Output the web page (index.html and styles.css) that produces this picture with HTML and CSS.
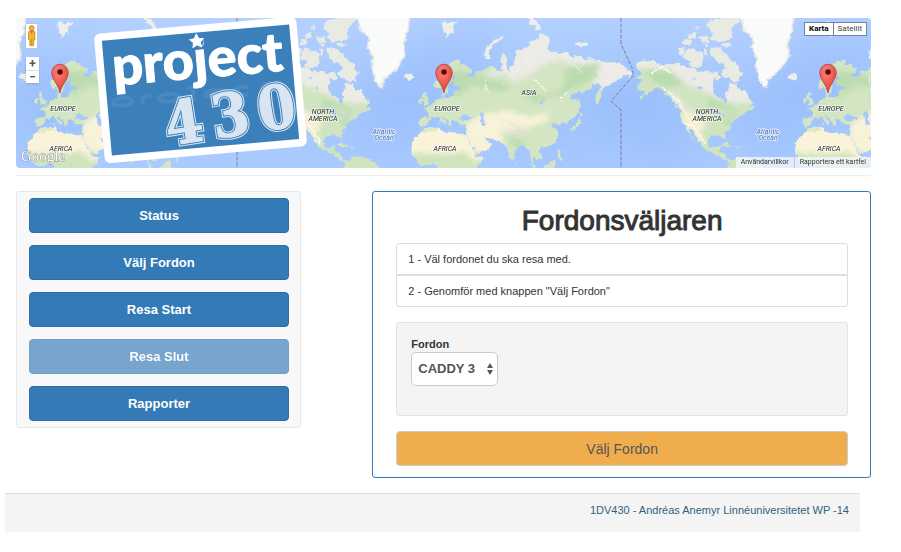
FILE: index.html
```html
<!DOCTYPE html>
<html lang="sv">
<head>
<meta charset="utf-8">
<title>Fordonsväljaren</title>
<link rel="stylesheet" href="styles.css">
</head>
<body>
<div class="page">
<header class="map">
  <svg class="map-canvas" viewBox="16 18 855 150" preserveAspectRatio="xMidYMid slice" aria-hidden="true">
    <defs>
      <linearGradient id="sea" x1="0" y1="0" x2="0" y2="1">
        <stop offset="0" stop-color="#b3d0ff"/><stop offset=".55" stop-color="#a5c7fd"/><stop offset="1" stop-color="#aacbff"/>
      </linearGradient>
      <radialGradient id="pinFill" cx=".4" cy=".25" r=".7"><stop offset="0" stop-color="#ff8076"/><stop offset="1" stop-color="#e2453c"/></radialGradient>
      <filter id="coast" x="-5%" y="-5%" width="110%" height="110%">
        <feTurbulence type="fractalNoise" baseFrequency=".22" numOctaves="2" seed="4" result="n"/>
        <feDisplacementMap in="SourceGraphic" in2="n" scale="5" xChannelSelector="R" yChannelSelector="G"/>
      </filter>
      <filter id="soft"><feGaussianBlur stdDeviation="8"/></filter>
      <filter id="deep"><feGaussianBlur stdDeviation="22"/></filter>
      <path id="eurasia" d="M403 232L405 215 418 208 428 190 445 165 458 155 468 150 482 153 484 162 500 165 515 178 516 188 500 192 506 200 520 202 530 190 528 182 545 184 560 174 572 168 590 176 604 187 608 160 602 135 612 128 620 150 618 175 628 187 634 165 642 160 648 125 665 120 685 110 690 95 715 85 722 70 740 78 752 95 740 108 745 125 770 122 775 132 800 125 815 140 840 138 855 150 875 148 900 152 920 155 955 158 980 175 998 190 990 200 970 194 965 205 945 212 930 225 910 232 908 245 895 280 887 283 886 262 892 245 906 225 890 222 870 235 850 245 825 248 808 260 818 272 835 268 840 288 835 310 820 325 800 340 790 335 775 348 768 345 765 335 750 345 760 352 772 362 775 375 765 395 745 410 735 412 722 415 715 420 725 435 722 450 710 450 702 440 698 452 708 480 700 480 692 445 688 420 680 418 670 405 655 410 645 420 640 450 632 448 620 415 610 400 595 392 570 388 560 385 550 378 560 392 577 400 568 415 540 430 527 435 515 410 500 385 498 370 500 352 498 346 480 346 475 338 465 328 455 330 457 345 450 348 440 330 424 317 430 328 438 336 433 345 424 333 413 318 400 325 393 322 385 335 375 348 360 350 357 335 360 323 385 322 388 305 372 295 385 290 400 278 415 268 425 262 424 248 430 246 433 262 455 262 462 255 465 240 485 235 480 228 462 228 458 215 468 200 460 195 455 210 445 225 440 250 432 255 425 235 415 235Z"/>
      <path id="africa" d="M375 355L395 351 418 350 424 365 440 370 455 367 480 372 497 375 505 395 515 415 527 440 550 440 545 455 530 470 530 490 420 490 413 468 398 463 375 468 360 465 345 445 334 430 336 398 347 383 360 370Z"/>
      <path id="namerica" d="M138 160L165 150 195 155 215 165 250 162 265 158 290 172 310 176 335 190 350 180 360 190 385 185 370 210 368 235 375 255 395 262 405 285 412 270 408 250 415 235 420 218 440 225 450 240 465 240 475 262 492 280 478 290 495 300 480 303 465 308 450 322 425 340 420 352 405 372 410 392 400 382 385 375 365 378 352 390 355 410 375 412 390 405 388 425 400 430 410 448 430 455 418 460 395 445 375 430 345 418 330 400 310 368 296 352 302 375 314 392 304 382 288 350 275 335 270 300 262 285 240 265 215 240 195 235 175 250 150 262 165 245 145 240 140 225 155 212 135 205 158 190 140 175Z"/>
      <clipPath id="eurasiaClip"><use href="#eurasia"/></clipPath>
      <clipPath id="africaClip"><use href="#africa"/></clipPath>
      <clipPath id="namericaClip"><use href="#namerica"/></clipPath>
      <g id="world">
        <g clip-path="url(#eurasiaClip)">
          <path fill="#d3e5c3" d="M340 60H1010V490H340z"/>
          <g filter="url(#soft)">
            <path fill="#ecebe6" d="M560 205L600 150 650 60H1010V235L900 240 850 180 780 150 730 165 690 195 640 215 610 190Z"/>
            <path fill="#bcdcb0" d="M440 180L520 190 640 230 600 245 520 225 470 260 440 220zM800 170L900 160 890 200 820 240 700 280 660 230 740 260 790 230zM620 380L680 390 650 420z"/>
            <path fill="#f8f2d8" d="M495 345L550 310 620 300 690 320 750 305 740 335 690 350 670 365 600 365 615 400 570 440 500 410z"/>
            <path fill="#e6e2d4" d="M605 325L640 345 690 355 680 368 640 365z"/>
          </g>
          <path fill="#a8c9fc" d="M476 322L492 311 505 318 518 322 515 330 490 331zM538 310L552 306 550 318 556 330 555 348 545 348 543 330zM716 280L735 264 738 268 720 283z"/>
          <path fill="none" stroke="#f8f6ef" stroke-width="3" d="M445 165L428 193 410 215M605 325L625 348 648 358M700 205L740 245M780 270L820 230M555 205L560 250M675 165L700 130M825 165L850 195"/>
        </g>
        <g clip-path="url(#africaClip)">
          <path fill="#f9f3da" d="M320 340H570V490H320z"/><path fill="#cfe4bd" filter="url(#soft)" d="M325 428L440 432 500 425 525 455 570 440V500H325z"/>
          <path fill="#e0e8c4" d="M370 353L418 350 405 362 365 370z"/>
        </g>
        <path fill="#d3e5c3" d="M370 245L380 248 379 260 388 272 390 283 368 289 376 276 369 265zM357 268L368 264 367 279 358 281zM838 307L852 313 842 320zM838 322L842 336 834 352 812 361 804 356 826 348zM774 418L782 420 780 434 788 444 784 455 774 440zM768 378L773 382 770 390zM643 450L649 458 644 462zM728 473L760 450 768 460 760 480H735zM415 338L420 337 420 343 415 345z"/>
        <path fill="#eeeeea" d="M310 203L316 191 338 192 342 200 327 211zM424 36L438 33 440 44 450 36 472 35 464 48 456 50 462 73 450 68 440 82 430 64zM684 22L704 24 720 45 722 58 706 62 708 47 690 40zM826 96L838 93 842 103 856 96 866 106 840 110 828 106zM862 139L872 142 866 148zM555 146L553 130 560 112 574 98 590 86 605 79 606 87 590 96 574 110 566 128 571 148z"/>
        <g transform="translate(870 0)">
          <g clip-path="url(#namericaClip)">
            <path fill="#d0e4c0" d="M120 140H510V470H120z"/>
            <g filter="url(#soft)">
              <path fill="#ecebe5" d="M120 140L260 145 350 170 480 180 500 275 420 280 350 245 300 230 270 200 200 180 130 175zM230 230L285 280 300 330 278 300 255 280z"/>
              <path fill="#badbaf" d="M165 175L240 180 270 220 240 235 190 215zM350 265L430 290 430 300 350 290zM400 340L440 290 420 350z"/>
              <path fill="#f7efd6" d="M270 320L300 300 350 340 330 370 350 400 330 400z"/>
            </g>
            <path fill="none" stroke="#fbfaf4" stroke-width="4" d="M218 232L262 268 292 318M180 190L220 170 240 190M280 340L312 348 345 400"/>
            <path fill="#a8c9fc" d="M304 205L316 202 318 209zM324 233L338 229 332 240zM365 305L382 298 392 304 380 308zM384 310L390 307 389 325 384 326zM397 309L407 316 400 322z"/>
          </g>
          <path fill="#e9ebe2" d="M294 115L318 121 337 125 341 143 334 170 320 174 298 170 302 153 280 145zM266 115L281 111 288 126 275 142 267 136zM343 115L352 118 350 138 340 130zM276 96L290 88 306 90 304 104 284 104zM296 78L318 66 318 81 300 88zM326 78L352 80 360 95 336 96zM360 115L384 110 406 128 428 154 443 160 446 180 460 190 448 198 447 213 432 218 418 202 404 205 395 188 410 172 398 158 380 156 366 136zM370 198L388 190 396 204 380 212zM352 40L372 26 412 24H456L440 40 425 58 427 84 408 94 372 94 360 84 372 70 355 58zM342 97L356 104 350 112zM312 51L328 48 326 60zM390 102L420 101 424 107 400 110z"/>
          <path fill="#d0e4c0" d="M413 470L422 455 440 442 460 440 480 445 512 460 522 490H410zM387 404L408 400 424 408 420 411zM427 410L448 411 444 417zM478 289L494 290 490 301zM249 280L266 292 262 298zM151 258L160 255 153 272zM90 145L99 147 94 151z"/>
          <path fill="#f9fafa" stroke="#e5e8e6" stroke-width="5" d="M445 10L458 36 462 62 490 84 484 112 502 142 498 172 505 200 515 225 527 234 535 207 560 188 584 160 597 133 592 100 606 64 612 10z"/>
        </g>
      </g>
      <g id="labels" font-family="Roboto, sans-serif" font-size="7" font-style="italic" fill="#222" stroke="#fff" stroke-opacity=".65" stroke-width="1.4" paint-order="stroke" text-anchor="middle">
        <text x="447" y="111">EUROPE</text><text x="445" y="151">AFRICA</text><text x="529" y="95">ASIA</text>
        <text x="707" y="114">NORTH</text><text x="707" y="121">AMERICA</text>
        <g fill="#4e73aa"><text x="768" y="134">Atlantic</text><text x="768" y="140">Ocean</text></g>
      </g>
      <g id="pin">
        <path fill="url(#pinFill)" stroke="#a52b25" stroke-width=".6" d="M0 0C-1-8-8.300-13-8.300-20.500A8.300 8.300 0 0 1 8.300-20.500C8.300-13 1-8 0 0Z"/>
        <circle cy="-21" r="2.800" fill="#51100c"/>
      </g>
    </defs>
    <path fill="url(#sea)" d="M16 18H871V168H16z"/>
    <g fill="#8db6fb" opacity=".4" filter="url(#deep)">
      <path d="M390 60L500 20 480 90 430 110 400 160 350 130zM600 70L660 60 700 140 670 170 580 130zM774 60L871 20V100L815 110 784 160 734 130zM500 140L600 125 560 170zM16 70L70 50 90 110 30 160z"/>
    </g>
    <g filter="url(#coast)">
      <g transform="translate(300 10) scale(.33333)">
        <use href="#world" x="-2304"/><use href="#world" x="-1152"/><use href="#world"/><use href="#world" x="1152"/>
      </g>
    </g>
    <g fill="none" stroke="#765f88" stroke-width="1" stroke-dasharray="4 1.500" opacity=".75">
      <path id="dateline" d="M621 18V44L633 70V76L611 101 621 110V168"/><use href="#dateline" x="-384"/>
    </g>
    <use href="#labels" x="-384"/><use href="#labels"/><use href="#labels" x="384"/>
    <use href="#pin" x="60" y="93"/><use href="#pin" x="444" y="93"/><use href="#pin" x="828" y="93"/>
    <text x="21" y="161" font-family="Liberation Serif, serif" font-size="15" fill="#fff" stroke="#888" stroke-width=".8" paint-order="stroke">Google</text>
    <g>
      <rect x="25.500" y="23.500" width="12" height="25" rx="1" fill="#fff" stroke="#aab" stroke-width=".6"/>
      <path fill="#f5b32b" stroke="#b87818" stroke-width=".6" d="M28.500 32L30 30.500H33.500L35 32V40H33.700V45.500H29.800V40H28.500z"/><circle cx="31.700" cy="28" r="2.500" fill="#f5b32b" stroke="#b87818" stroke-width=".6"/>
      <path d="M30 31H33.500L31.700 34z" fill="#e5673d"/><path d="M31.700 39V45" stroke="#b87818" stroke-width=".6"/>
    </g>
    <g transform="rotate(-5 200 90)">
      <rect x="99" y="25" width="203" height="130" rx="6" fill="#fff"/>
      <rect x="106.500" y="32.500" width="188" height="115" fill="#3b80ba"/>
      <g fill="none" stroke="#6fa2cd" stroke-width="4" opacity=".28">
        <path d="M113 99V91M113 95a9 4 0 1 0 9-4a9 4 0 0 0-9 4M142 99V95q0-4 9-4M158 95a10 4 0 1 0 20 0a10 4 0 1 0-20 0M193 100V91q0-4-6-4M204 95H225q-1-4-10-4-10 1-10 4 0 4 13 4M249 91q-16-1-17 4 1 4 16 4M263 99V92q0-3 12-2"/>
      </g>
      <text x="200" y="78" font-family="Lato, sans-serif" font-weight="900" font-size="54" text-anchor="middle" fill="#fff" stroke="#fff" stroke-linejoin="round">project</text>
      <circle cx="201" cy="41" r="7" fill="#3b80ba"/>
      <path fill="#fff" stroke="#fff" stroke-linejoin="round" d="M201 34l2.100 4.400 4.800.6-3.500 3.300.9 4.800-4.300-2.300-4.300 2.300.9-4.800-3.500-3.300 4.800-.6z"/>
    </g>
    <g transform="rotate(-9 230 114)" font-family="DejaVu Serif Condensed, DejaVu Serif, serif" font-weight="700" font-size="60" text-anchor="middle" fill="#d9e6f2">
      <defs><g id="digits"><text x="183" y="136">4</text><text x="230" y="136">3</text><text x="277" y="136">0</text></g></defs>
      <use href="#digits" stroke="#d9e6f2" stroke-width="5"/>
      <use href="#digits" stroke="#3b80ba" stroke-width="3"/>
      <use href="#digits" stroke="#d9e6f2" stroke-width="1"/>
    </g>
  </svg>
  <div class="zoom"><button type="button" aria-label="Zooma in">+</button><button type="button" aria-label="Zooma ut">−</button></div>
  <div class="map-type"><button type="button" class="current">Karta</button><button type="button">Satellit</button></div>
  <div class="map-links"><a href="#">Användarvillkor</a><a href="#">Rapportera ett kartfel</a></div>
</header>
<hr class="rule">
<div class="columns">
  <nav class="menu">
    <button type="button">Status</button>
    <button type="button">Välj Fordon</button>
    <button type="button">Resa Start</button>
    <button type="button" disabled>Resa Slut</button>
    <button type="button">Rapporter</button>
  </nav>
  <main class="panel">
    <h1>Fordonsväljaren</h1>
    <ul class="steps">
      <li>1 - Väl fordonet du ska resa med.</li>
      <li>2 - Genomför med knappen "Välj Fordon"</li>
    </ul>
    <form>
      <div class="well">
        <label for="vehicle">Fordon</label>
        <div class="picker">
          <select id="vehicle"><option>CADDY 3</option></select>
          <svg class="arrows" viewBox="0 0 8 14" aria-hidden="true"><path fill="#555" d="M4 1L7 6H1zM4 13L1 8H7z"/></svg>
        </div>
      </div>
      <button type="button" class="submit">Välj Fordon</button>
    </form>
  </main>
</div>
</div>
<footer class="footer">1DV430 - Andréas Anemyr Linnéuniversitetet WP -14</footer>
</body>
</html>
```
FILE: styles.css
```css
* { box-sizing: border-box; }
body {
  margin: 18px 30px 20px 5px;
  font: 11px/16px "Liberation Sans", Arial, sans-serif;
  color: #333;
  background: #fff;
}
.page { padding-left: 11px; }
button, select { font: inherit; cursor: pointer; }
.map {
  position: relative;
  border-radius: 4px;
  overflow: hidden;
  font-family: Roboto, sans-serif;
}
.map-canvas { display: block; width: 100%; height: 150px; }
.zoom {
  position: absolute;
  left: 10px;
  top: 39px;
  width: 13px;
  display: grid;
  background: #fff;
  box-shadow: 0 1px 2px #8888;
}
.zoom button {
  height: 13px;
  padding: 0;
  border: 0;
  background: none;
  color: #555;
  font-size: 12px;
  line-height: 12px;
  font-weight: 700;
}
.zoom button + button { border-top: 1px solid #ddd; }
.map-type {
  position: absolute;
  right: 4px;
  top: 4px;
  display: flex;
  background: #fff;
  border: 1px solid #7183a0;
}
.map-type button {
  padding: 0 4px;
  border: 0;
  background: none;
  color: #444;
  font-size: 8px;
  line-height: 12px;
}
.map-type .current { color: #000; font-weight: 700; }
.map-type button + button { border-left: 1px solid #7183a0; }
.map-links {
  position: absolute;
  right: 0;
  bottom: 0;
  display: flex;
  background: #f3f6f8cc;
  font-size: 7px;
  line-height: 11px;
}
.map-links a { padding: 0 5px; color: #333; text-decoration: none; }
.map-links a + a { border-left: 1px solid #b5c9e3; }
.rule { margin: 7px 0 15px; border: 0; border-top: 1px solid #eee; }
.columns {
  display: grid;
  grid-template-columns: 4fr 1fr 7fr;
  align-items: start;
}
.menu {
  display: grid;
  gap: 12px;
  padding: 6px 11px 6px 12px;
  background: #f8f8f8;
  border: 1px solid #e7e7e7;
  border-radius: 3px;
}
.menu button {
  height: 35px;
  border: 1px solid #2e6da4;
  border-radius: 4px;
  background: #337ab7;
  color: #fff;
  font-size: 13px;
  font-weight: 700;
}
.menu button:disabled { opacity: .65; cursor: default; }
.panel {
  grid-column: 3;
  padding: 13px 22px 11px 23px;
  border: 1px solid #337ab7;
  border-radius: 3px;
}
h1 {
  margin: 0 0 6px;
  font-size: 28px;
  line-height: 32px;
  font-weight: 400;
  text-align: center;
  -webkit-text-stroke: 1px;
}
.steps { margin: 0 0 15px; padding: 0; list-style: none; }
.steps li { padding: 7px 11px; border: 1px solid #ddd; }
.steps li:first-child { border-radius: 3px 3px 0 0; }
.steps li:last-child { border-radius: 0 0 3px 3px; }
.well {
  margin-bottom: 15px;
  padding: 13px 14px 29px;
  background: #f4f4f4;
  border: 1px solid #e3e3e3;
  border-radius: 3px;
}
.well label { display: block; font-weight: 700; }
.picker { position: relative; width: max-content; }
.picker select {
  display: block;
  height: 34px;
  padding: 0 21px 0 6px;
  border: 1px solid #ccc;
  border-radius: 5px;
  appearance: none;
  background: #fff;
  color: #555;
  font-size: 13px;
  font-weight: 700;
}
.arrows {
  position: absolute;
  right: 4px;
  top: 10px;
  width: 8px;
  height: 14px;
  pointer-events: none;
}
.submit {
  display: block;
  width: 100%;
  height: 35px;
  border: 1px solid #ccc;
  border-radius: 4px;
  background: #f0ad4e;
  color: #555;
  font-size: 14px;
}
.footer {
  margin: 15px 11px 0 0;
  padding: 8px 11px 14px;
  border-top: 1px solid #ddd;
  background: #f4f4f4;
  color: #31617f;
  text-align: right;
}
```
